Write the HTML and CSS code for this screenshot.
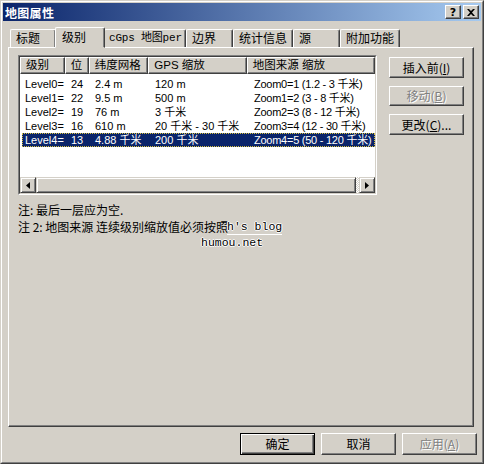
FILE: index.html
```html
<!DOCTYPE html>
<html lang="zh">
<head>
<meta charset="utf-8">
<title>地图属性</title>
<link rel="stylesheet" href="styles.css">
</head>
<body>
<div class="window">
  <div class="frame">
    <div class="titlebar">
      <span class="title">地图属性</span>
      <div class="caption-btns">
        <span class="cbtn help">?</span>
        <span class="cbtn close">
          <svg width="8" height="7" viewBox="0 0 8 7"><path d="M0 0h2l2 2 2-2h2L5 3.5 8 7H6L4 5 2 7H0l3-3.5z" fill="#000"/></svg>
        </span>
      </div>
    </div>

    <div class="tabs">
      <div class="tab w46">标题</div>
      <div class="tab sel">级别</div>
      <div class="tab w82 mono">cGps 地图per</div>
      <div class="tab w47">边界</div>
      <div class="tab w60">统计信息</div>
      <div class="tab w47">源</div>
      <div class="tab w60">附加功能</div>
    </div>

    <div class="panel">
      <div class="top-row">
        <div class="listview">
          <div class="lv-inner">
            <div class="lv-header">
              <div class="hcell c1">级别</div>
              <div class="hcell c2">位</div>
              <div class="hcell c3">纬度网格</div>
              <div class="hcell c4">GPS 缩放</div>
              <div class="hcell c5">地图来源 缩放</div>
            </div>
            <div class="lv-body">
              <div class="row"><span class="c1">Level0=</span><span class="c2">24</span><span class="c3">2.4 m</span><span class="c4">120 m</span><span class="c5">Zoom0=1 (1.2 - 3 千米)</span></div>
              <div class="row"><span class="c1">Level1=</span><span class="c2">22</span><span class="c3">9.5 m</span><span class="c4">500 m</span><span class="c5">Zoom1=2 (3 - 8 千米)</span></div>
              <div class="row"><span class="c1">Level2=</span><span class="c2">19</span><span class="c3">76 m</span><span class="c4">3 千米</span><span class="c5">Zoom2=3 (8 - 12 千米)</span></div>
              <div class="row"><span class="c1">Level3=</span><span class="c2">16</span><span class="c3">610 m</span><span class="c4">20 千米 - 30 千米</span><span class="c5">Zoom3=4 (12 - 30 千米)</span></div>
              <div class="row selected"><span class="c1">Level4=</span><span class="c2">13</span><span class="c3">4.88 千米</span><span class="c4">200 千米</span><span class="c5">Zoom4=5 (50 - 120 千米)</span></div>
            </div>
            <div class="hscroll">
              <span class="sbtn"><svg width="4" height="7" viewBox="0 0 4 7"><path d="M4 0v7L0 3.5z" fill="#000"/></svg></span>
              <span class="thumb"></span>
              <span class="track"></span>
              <span class="sbtn"><svg width="4" height="7" viewBox="0 0 4 7"><path d="M0 0v7l4-3.5z" fill="#000"/></svg></span>
            </div>
          </div>
        </div>
        <div class="side-btns">
          <div class="btn">插入前(<u>I</u>)</div>
          <div class="btn disabled">移动(<u>B</u>)</div>
          <div class="btn">更改(<u>C</u>)...</div>
        </div>
      </div>
      <div class="notes">
        <p>注: 最后一层应为空.</p>
        <p>注 2: 地图来源 连续级别缩放值必须按照</p>
        <div class="watermark">
          <span class="wm1">h's blog</span>
          <span class="wm2">humou.net</span>
        </div>
      </div>
    </div>

    <div class="bottom-btns">
      <div class="btn default">确定</div>
      <div class="btn">取消</div>
      <div class="btn disabled">应用(<u>A</u>)</div>
    </div>
  </div>
</div>
</body>
</html>
```

FILE: styles.css
```css
* { box-sizing: border-box; }
html, body { margin: 0; padding: 0; }
body {
  width: 484px;
  height: 464px;
  background: #d4d0c8;
  font-family: "Liberation Sans", "Noto Sans CJK SC", sans-serif;
  font-size: 12px;
  color: #000;
  overflow: hidden;
}
.window {
  width: 484px;
  height: 464px;
  border: 1px solid;
  border-color: #d4d0c8 #404040 #404040 #d4d0c8;
}
.frame {
  height: 100%;
  border: 1px solid;
  border-color: #fff #808080 #808080 #fff;
  padding: 1px;
  position: relative;
}
.titlebar {
  height: 18px;
  background: linear-gradient(to right, #0a246a, #a6caf0);
  display: flex;
  align-items: center;
  justify-content: space-between;
  padding: 0 2px 0 2px;
}
.title {
  color: #fff;
  font-weight: bold;
  font-size: 12px;
  font-family: "Noto Sans CJK SC", sans-serif;
  letter-spacing: 0.3px;
}
.caption-btns { display: flex; gap: 2px; }
.cbtn {
  width: 16px;
  height: 14px;
  background: #d4d0c8;
  border: 1px solid;
  border-color: #fff #404040 #404040 #fff;
  box-shadow: inset -1px -1px 0 #808080;
  display: flex;
  align-items: center;
  justify-content: center;
  font: bold 11px "DejaVu Sans", sans-serif;
  line-height: 1;
}
.tabs {
  display: flex;
  height: 20px;
  margin-top: 6px;
  padding-left: 7px;
  align-items: flex-end;
  position: relative;
  z-index: 2;
}
.tab {
  height: 18px;
  border-top: 1px solid #fff;
  border-left: 1px solid #fff;
  border-right: 1px solid #404040;
  box-shadow: inset -1px 0 0 #808080;
  border-top-left-radius: 2px;
  border-top-right-radius: 2px;
  font-family: "Noto Sans CJK SC", sans-serif;
  font-size: 12px;
  padding: 0 0 0 5px;
  line-height: 16px;
  background: #d4d0c8;
  white-space: nowrap;
  overflow: hidden;
}
.tab.mono { font-family: "Liberation Mono", "Noto Sans CJK SC", monospace; font-size: 11px; padding-left: 4px; letter-spacing: -0.2px; }
.w46 { width: 46px; }
.w47 { width: 47px; }
.w60 { width: 60px; }
.w82 { width: 82px; }
.tab.sel {
  width: 50px;
  height: 21px;
  margin: 0 -2px 0 -1px;
  padding-left: 6px;
  line-height: 18px;
  position: relative;
  z-index: 3;
  border-bottom: 1px solid #d4d0c8;
  margin-bottom: -1px;
}
.tab.sel + .tab { margin-left: 1px; }
.panel {
  margin: 0 0 0 5px;
  width: 466px;
  height: 380px;
  border: 1px solid;
  border-color: #fff #404040 #404040 #fff;
  box-shadow: inset -1px -1px 0 #808080;
  padding: 7px 9px 0 9px;
  position: relative;
}
.top-row { display: flex; align-items: flex-start; }
.listview {
  width: 359px;
  height: 140px;
  border: 1px solid;
  border-color: #808080 #fff #fff #808080;
  flex-shrink: 0;
}
.lv-inner {
  height: 100%;
  border: 1px solid;
  border-color: #404040 #d4d0c8 #d4d0c8 #404040;
  background: #fff;
  display: flex;
  flex-direction: column;
  overflow: hidden;
}
.lv-header { display: flex; height: 17px; flex-shrink: 0; }
.hcell {
  height: 17px;
  background: #d4d0c8;
  border: 1px solid;
  border-color: #fff #404040 #404040 #fff;
  box-shadow: inset -1px -1px 0 #808080;
  padding-left: 5px;
  line-height: 14px;
  white-space: nowrap;
  overflow: hidden;
  font-family: "Liberation Sans", "Noto Sans CJK SC", sans-serif;
  font-size: 11.5px;
}
.c1 { width: 45px; }
.c2 { width: 24px; }
.c3 { width: 60px; }
.c4 { width: 99px; }
.c5 { width: 127px; }
.hcell.c5 { width: 129px; }
.lv-body { flex: 1; padding-top: 3px; font-size: 11px; }
.row { display: flex; height: 14px; line-height: 14px; white-space: nowrap; }
.row span { padding-left: 6px; overflow: hidden; flex-shrink: 0; }
.row .c1 { padding-left: 5px; }
.row .c5 { flex: 1; width: auto; overflow: visible; padding-left: 6px; letter-spacing: -0.25px; }
.row.selected {
  background: #0a246a;
  color: #fff;
  margin-left: 2px;
  outline: 1px dotted #d8c040;
  outline-offset: -1px;
}
.row.selected .c1 { width: 43px; padding-left: 3px; }
.hscroll { display: flex; height: 16px; flex-shrink: 0; }
.sbtn {
  width: 16px;
  height: 16px;
  background: #d4d0c8;
  border: 1px solid;
  border-color: #d4d0c8 #404040 #404040 #d4d0c8;
  box-shadow: inset 1px 1px 0 #fff, inset -1px -1px 0 #808080;
  display: flex;
  align-items: center;
  justify-content: center;
  flex-shrink: 0;
}
.thumb {
  width: 320px;
  height: 16px;
  background: #d4d0c8;
  border: 1px solid;
  border-color: #d4d0c8 #404040 #404040 #d4d0c8;
  box-shadow: inset 1px 1px 0 #fff, inset -1px -1px 0 #808080;
}
.track {
  flex: 1;
  background-color: #fff;
  background-image: repeating-conic-gradient(#d4d0c8 0 25%, #fff 0 50%);
  background-size: 2px 2px;
}
.side-btns {
  display: flex;
  flex-direction: column;
  gap: 8px;
  margin-left: 12px;
  margin-top: 2px;
}
.btn {
  width: 75px;
  height: 21px;
  background: #d4d0c8;
  border: 1px solid;
  border-color: #fff #404040 #404040 #fff;
  box-shadow: inset -1px -1px 0 #808080;
  display: flex;
  align-items: center;
  justify-content: center;
  font-family: "Noto Sans CJK SC", sans-serif;
  font-size: 12px;
  line-height: 1;
}
.btn u { text-decoration: underline; text-underline-offset: 1px; }
.btn.disabled { color: #808080; text-shadow: 1px 1px 0 #fff; }
.side-btns .btn:nth-child(2) { height: 20px; }
.notes { position: relative; margin-top: 6px; font-family: "Noto Sans CJK SC", sans-serif; }
.notes p { margin: 0; height: 17px; line-height: 17px; }
.watermark {
  position: absolute;
  left: 183px;
  top: 18px;
  font-family: "Liberation Mono", monospace;
  font-size: 11.5px;
  line-height: 15px;
  display: flex;
  flex-direction: column;
  align-items: flex-start;
}
.wm1 {
  margin-left: 26px;
  text-shadow: 1px 0 0 #fff, -1px 0 0 #fff, 0 1px 0 #fff, 0 -1px 0 #fff;
  border-bottom: 1px solid #fff;
}
.wm2 {
  margin-left: 0;
  text-shadow: 1px 0 0 #fff, -1px 0 0 #fff, 0 1px 0 #fff, 0 -1px 0 #fff;
}
.bottom-btns {
  display: flex;
  justify-content: flex-end;
  gap: 6px;
  margin-top: 6px;
  padding-right: 4px;
}
.bottom-btns .btn { height: 22px; }
.btn.default {
  border: 1px solid #000;
  box-shadow: inset 1px 1px 0 #fff, inset -1px -1px 0 #404040, inset -2px -2px 0 #808080;
}
```
